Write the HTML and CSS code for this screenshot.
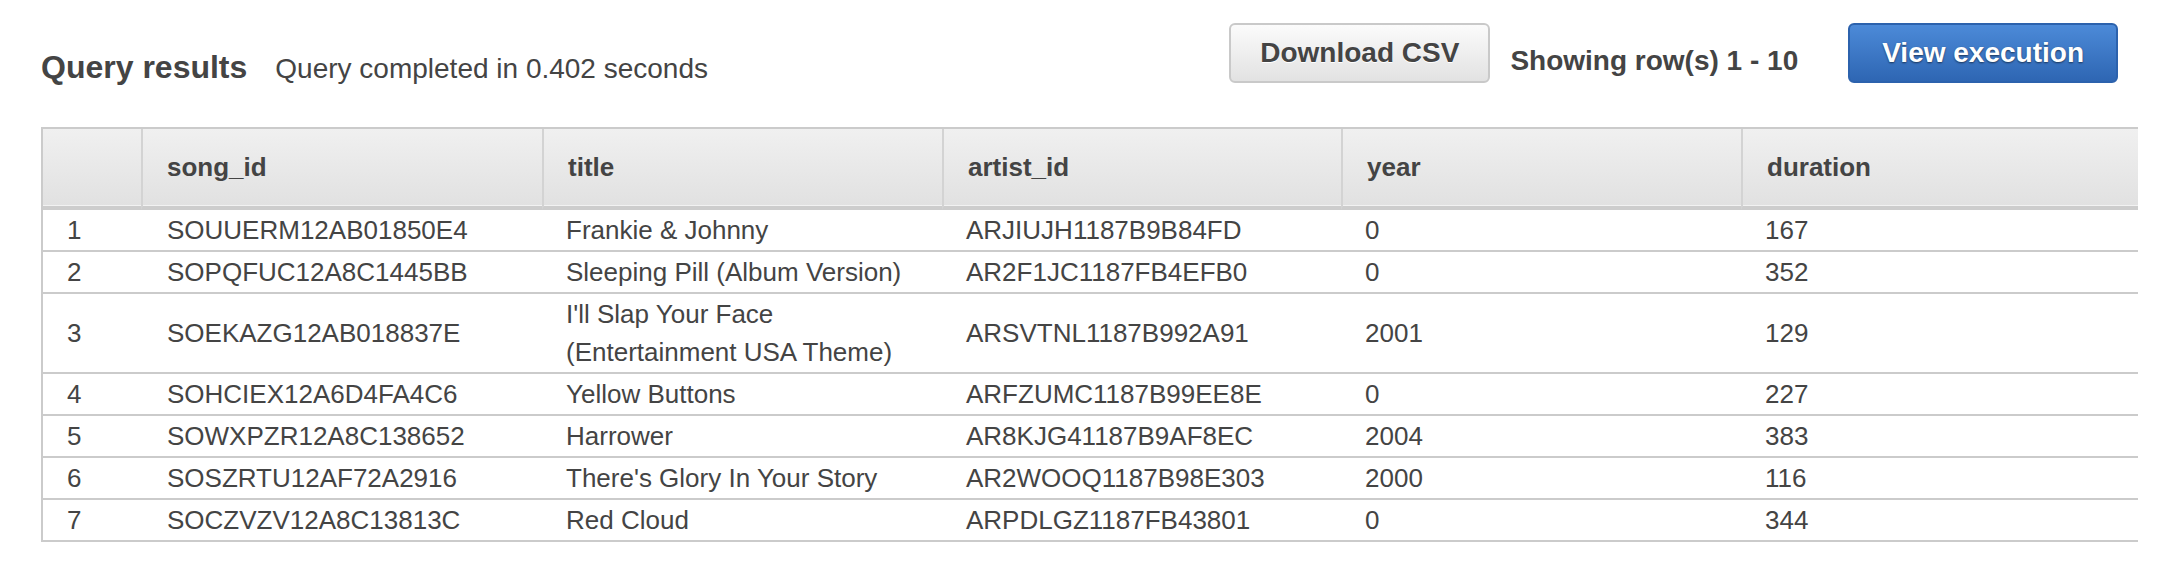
FILE: index.html
```html
<!DOCTYPE html>
<html lang="en">
<head>
<meta charset="utf-8">
<title>Query results</title>
<link rel="stylesheet" href="styles.css">
</head>
<body>
<div class="page">
  <div class="toolbar">
    <div class="heading">
      <h2 class="title">Query results</h2>
      <span class="meta">Query completed in 0.402 seconds</span>
    </div>
    <div class="actions">
      <button class="btn">Download CSV</button>
      <span class="count">Showing row(s) 1 - 10</span>
      <button class="btn btn-primary">View execution</button>
    </div>
  </div>
  <div class="results">
    <table class="grid">
      <colgroup>
        <col class="c-idx"><col class="c-song"><col class="c-title"><col class="c-artist"><col class="c-year"><col class="c-dur">
      </colgroup>
      <thead>
        <tr><th></th><th>song_id</th><th>title</th><th>artist_id</th><th>year</th><th>duration</th></tr>
      </thead>
      <tbody>
        <tr><td>1</td><td>SOUUERM12AB01850E4</td><td>Frankie &amp; Johnny</td><td>ARJIUJH1187B9B84FD</td><td>0</td><td>167</td></tr>
        <tr><td>2</td><td>SOPQFUC12A8C1445BB</td><td>Sleeping Pill (Album Version)</td><td>AR2F1JC1187FB4EFB0</td><td>0</td><td>352</td></tr>
        <tr><td>3</td><td>SOEKAZG12AB018837E</td><td>I'll Slap Your Face (Entertainment USA Theme)</td><td>ARSVTNL1187B992A91</td><td>2001</td><td>129</td></tr>
        <tr><td>4</td><td>SOHCIEX12A6D4FA4C6</td><td>Yellow Buttons</td><td>ARFZUMC1187B99EE8E</td><td>0</td><td>227</td></tr>
        <tr><td>5</td><td>SOWXPZR12A8C138652</td><td>Harrower</td><td>AR8KJG41187B9AF8EC</td><td>2004</td><td>383</td></tr>
        <tr><td>6</td><td>SOSZRTU12AF72A2916</td><td>There's Glory In Your Story</td><td>AR2WOOQ1187B98E303</td><td>2000</td><td>116</td></tr>
        <tr><td>7</td><td>SOCZVZV12A8C13813C</td><td>Red Cloud</td><td>ARPDLGZ1187FB43801</td><td>0</td><td>344</td></tr>
      </tbody>
    </table>
  </div>
</div>
</body>
</html>
```

FILE: styles.css
```css
* { box-sizing: border-box; }

html, body {
  margin: 0;
  padding: 0;
  background: #ffffff;
}

body {
  font-family: "Liberation Sans", Arial, Helvetica, sans-serif;
  color: #444444;
}

.page {
  padding: 0 46px 0 41px;
}

.toolbar {
  display: flex;
  justify-content: space-between;
  align-items: flex-start;
  height: 127px;
  padding: 23px 20px 0 0;
}

.heading {
  display: flex;
  align-items: baseline;
  margin-top: 24px;
}

.title {
  margin: 0;
  font-size: 32px;
  line-height: 40px;
  font-weight: bold;
  color: #444444;
}

.meta {
  margin-left: 28px;
  font-size: 28px;
  line-height: 40px;
  color: #444444;
}

.actions {
  display: flex;
  align-items: flex-start;
}

.btn {
  height: 60px;
  padding: 0 29px;
  border: 2px solid #c9c9c9;
  border-radius: 6px;
  background: linear-gradient(#fbfbfb, #e2e2e2);
  font-family: "Liberation Sans", Arial, Helvetica, sans-serif;
  font-size: 28px;
  font-weight: bold;
  color: #444444;
  text-shadow: 0 1px 0 #ffffff;
  cursor: pointer;
}

.count {
  margin: 20px 50px 0 20px;
  font-size: 28px;
  line-height: 36px;
  font-weight: bold;
  color: #444444;
}

.btn-primary {
  padding: 0 32px;
  border-color: #2c62ad;
  background: linear-gradient(#4c8ad8, #2e66b3);
  color: #ffffff;
  text-shadow: 0 1px 2px rgba(0, 0, 0, 0.55);
}

.results {
  border-top: 2px solid #cbcbcb;
  border-left: 2px solid #cbcbcb;
  overflow: hidden;
}

.grid {
  border-collapse: separate;
  border-spacing: 0;
  table-layout: fixed;
  width: 2098px;
  font-size: 26px;
}

.c-idx { width: 98px; }
.c-song { width: 401px; }
.c-title { width: 400px; }
.c-artist { width: 399px; }
.c-year { width: 400px; }
.c-dur { width: 400px; }

.grid th {
  height: 81px;
  padding: 0 24px;
  text-align: left;
  vertical-align: middle;
  font-weight: bold;
  color: #444444;
  background: linear-gradient(#f0f0f0, #e1e1e1);
  border-bottom: 4px solid #cdcdcd;
  border-left: 2px solid #d3d3d3;
  box-shadow: inset 0 -1px 0 #f2f2f2;
}

.grid th:first-child {
  border-left: none;
}

.grid td {
  padding: 1px 24px;
  line-height: 38px;
  vertical-align: middle;
  color: #444444;
  border-bottom: 2px solid #cbcbcb;
}

.grid td:nth-child(2) {
  padding-left: 26px;
}
```
